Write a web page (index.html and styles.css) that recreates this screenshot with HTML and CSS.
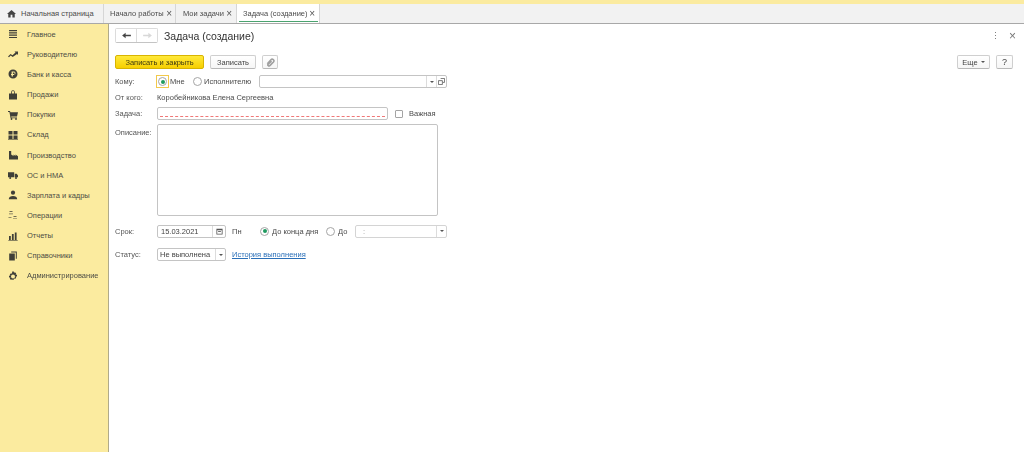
FILE: index.html
```html
<!DOCTYPE html>
<html lang="ru">
<head>
<meta charset="utf-8">
<title>Задача (создание)</title>
<link rel="stylesheet" href="styles.css">
</head>
<body>
<div class="app">
  <div class="topstrip"></div>
  <div class="tabbar">
    <div class="tab tab-home">
      <svg class="ico-home" viewBox="0 0 10 10"><path d="M5 1 L10 5.6 H8.6 V9.5 H6 V6.5 H4 V9.5 H1.4 V5.6 H0 Z"/></svg>
      <span>Начальная страница</span>
    </div>
    <div class="tab tab-a"><span>Начало работы</span><span class="x">×</span></div>
    <div class="tab tab-b"><span>Мои задачи</span><span class="x">×</span></div>
    <div class="tab tab-c"><span>Задача (создание)</span><span class="x">×</span></div>
  </div>
  <div class="main">
    <nav class="side">
      <div class="item"><svg viewBox="0 0 10 10"><path d="M1 1h8v1.2H1zM1 3.3h8v1.2H1zM1 5.6h8v1.2H1zM1 7.9h8v1.2H1z"/></svg><span>Главное</span></div>
      <div class="item"><svg viewBox="0 0 10 10"><path d="M0 7.5 L2.5 5 L4.5 6.3 L7.5 3.5 L6.5 2.6 H10 V6 L9 5 L4.7 8 L2.7 6.6 L1 8.3 Z"/></svg><span>Руководителю</span></div>
      <div class="item"><svg viewBox="0 0 10 10"><path fill-rule="evenodd" d="M5 .5a4.5 4.5 0 1 1 0 9 4.5 4.5 0 0 1 0-9zM3.6 2.5V5H3v1h.6v1.6h1.3V6h1.7V5H4.9V3.6h1.2a.7.7 0 0 1 0 1.4v1a1.8 1.8 0 0 0 0-3.5z"/></svg><span>Банк и касса</span></div>
      <div class="item"><svg viewBox="0 0 10 10"><path d="M1 3.5h2.2V2a1.8 1.8 0 0 1 3.6 0v1.5H9v6H1zM4 3.5h2V2a1 1 0 0 0-2 0z"/></svg><span>Продажи</span></div>
      <div class="item"><svg viewBox="0 0 10 10"><path d="M0 1h2l.4 1.2H10L9 6.5H3.2L3.4 7.4H9v.8H2.6L1.4 1.9H0z"/><circle cx="3.5" cy="9" r=".9"/><circle cx="8" cy="9" r=".9"/></svg><span>Покупки</span></div>
      <div class="item"><svg viewBox="0 0 10 10"><path d="M.5 1h4v3.6h-4zM5.5 1h4v3.6h-4zM.5 5.4h4V9h-4zM5.5 5.4h4V9h-4z"/><path d="M0 9.2h10v.6H0z"/></svg><span>Склад</span></div>
      <div class="item"><svg viewBox="0 0 10 10"><path d="M1 1h2.2v3.5L5.5 6V4.4L7.5 6V4.4L10 6.3V9.5H1z"/></svg><span>Производство</span></div>
      <div class="item"><svg viewBox="0 0 10 10"><path d="M0 2.2h6.2v5H0zM6.8 3.8h1.9L10 5.4v1.8H6.8z"/><circle cx="2.2" cy="8" r="1"/><circle cx="8" cy="8" r="1"/></svg><span>ОС и НМА</span></div>
      <div class="item"><svg viewBox="0 0 10 10"><circle cx="5" cy="2.7" r="2.1"/><path d="M.8 9.2c0-2 1.8-3.2 4.2-3.2s4.2 1.2 4.2 3.2z"/></svg><span>Зарплата и кадры</span></div>
      <div class="item"><svg viewBox="0 0 10 10"><path d="M1.5 1h3v1h-3zM1.5 3h1v1.5h-1zM3.5 3h1v1.5h-1zM5.5 6h3v1h-3zM5.5 8h1v1h-1zM7.5 8h1v1h-1zM.5 7h3v.8h-3z" opacity=".75"/></svg><span>Операции</span></div>
      <div class="item"><svg viewBox="0 0 10 10"><path d="M1 5h1.8v4H1zM3.9 3h1.8v6H3.9zM6.8 1.5h1.8V9H6.8z"/><path d="M.3 9h9.4v.6H.3z"/></svg><span>Отчеты</span></div>
      <div class="item"><svg viewBox="0 0 10 10"><path d="M3.2.6H8.8v7.2h-1V1.6H3.2zM1.2 2.4h5.6v7.2H1.2z"/></svg><span>Справочники</span></div>
      <div class="item"><svg viewBox="0 0 10 10"><path fill-rule="evenodd" d="M4.2.5h1.6l.2 1.3 1-.5 1.2 1.2-.6 1.1 1.4.2v1.6l-1.4.2.6 1.1-1.2 1.2-1-.6-.2 1.4H4.2L4 8.3l-1 .6-1.2-1.2.6-1.1L1 6.4V4.8l1.4-.2-.6-1.1L3 2.3l1 .5zM5 3.6a2 2 0 1 0 0 4 2 2 0 0 0 0-4z"/></svg><span>Администрирование</span></div>
    </nav>
    <section class="content">
      <header class="head">
        <div class="navbtns">
          <div class="navbtn"><svg viewBox="0 0 10 8"><path d="M0 4 L4 .8 V3.2 H10 V4.8 H4 V7.2 Z"/></svg></div>
          <div class="navbtn off"><svg viewBox="0 0 10 8"><path d="M10 4 L6 .8 V3.2 H0 V4.8 H6 V7.2 Z"/></svg></div>
        </div>
        <h1 class="title">Задача (создание)</h1>
        <div class="winctl"><span class="more">⋮</span><span class="close">×</span></div>
      </header>
      <div class="toolbar">
        <button class="btn primary">Записать и закрыть</button>
        <button class="btn save">Записать</button>
        <button class="btn clip"><svg viewBox="0 0 10 10"><path d="M1.5 6.5 L5.5 2 a1.8 1.8 0 0 1 2.8 2.4 L4.3 8.4 a1.2 1.2 0 0 1-1.9-1.6 L6.2 3.6"/></svg></button>
        <div class="spacer"></div>
        <button class="btn eshe">Еще <i class="caret"></i></button>
        <button class="btn help">?</button>
      </div>
      <form class="form">
        <div class="row r-komu">
          <label class="lbl">Кому:</label>
          <div class="focus"><i class="radio on"></i></div>
          <span class="t-me">Мне</span>
          <i class="radio"></i>
          <span class="t-isp">Исполнителю</span>
          <div class="field f-isp"><div class="grow"></div><div class="cell"><i class="caret"></i></div><div class="cell"><svg class="link-ico" viewBox="0 0 8 8"><path d="M3 .5h4.5V5H5.6M.5 3H5v4.5H.5z"/></svg></div></div>
        </div>
        <div class="row r-from">
          <label class="lbl">От кого:</label>
          <span>Коробейникова Елена Сергеевна</span>
        </div>
        <div class="row r-task">
          <label class="lbl">Задача:</label>
          <div class="field f-task"><div class="redline"></div></div>
          <i class="check"></i>
          <span>Важная</span>
        </div>
        <div class="row r-desc">
          <label class="lbl">Описание:</label>
          <div class="field f-desc"></div>
        </div>
        <div class="row r-date">
          <label class="lbl">Срок:</label>
          <div class="field f-date"><div class="grow val">15.03.2021</div><div class="cell cal"><svg viewBox="0 0 8 8"><path fill-rule="evenodd" d="M.5 .8h7v6.7h-7zM1.4 2.6v4h5.2v-4z"/><path d="M2.4 3.6h3.2v1H2.4z"/></svg></div></div>
          <span class="t-pn">Пн</span>
          <i class="radio on"></i>
          <span class="t-eod">До конца дня</span>
          <i class="radio"></i>
          <span class="t-do">До</span>
          <div class="field f-time"><div class="grow val dim">:</div><div class="cell"><i class="caret"></i></div></div>
        </div>
        <div class="row r-status">
          <label class="lbl">Статус:</label>
          <div class="field f-status"><div class="grow val">Не выполнена</div><div class="cell"><i class="caret"></i></div></div>
          <a class="hist" href="#">История выполнения</a>
        </div>
      </form>
    </section>
  </div>
</div>
</body>
</html>
```

FILE: styles.css
```css
* { box-sizing: border-box; }
html, body { margin: 0; padding: 0; height: 100%; background: #fff; overflow: hidden; }
body { font-family: "Liberation Sans", Arial, sans-serif; font-size: 7.5px; color: #4a4a4a; }
.app { width: 1024px; height: 452px; display: flex; flex-direction: column; opacity: .999; filter: blur(0.45px); }
.topstrip { height: 4px; background: #fbeba0; flex: none; }
.tabbar { height: 20px; flex: none; display: flex; align-items: stretch; background: #f2f2f2; border-bottom: 1px solid #a8a8a8; }
.tab { display: flex; align-items: center; border-right: 1px solid #d6d6d6; position: relative; white-space: nowrap; }
.tab-home { width: 104px; padding-left: 7px; gap: 5px; }
.ico-home { width: 9px; height: 9px; fill: #444; }
.tab-a { width: 72px; padding-left: 6px; justify-content: space-between; padding-right: 3px; }
.tab-b { width: 61px; padding-left: 7px; justify-content: space-between; padding-right: 4px; }
.tab-c { width: 83px; padding-left: 6px; justify-content: space-between; padding-right: 4px; background: #fff; }
.tab-c::after { content: ""; position: absolute; left: 2px; right: 1px; bottom: 1px; height: 1px; background: #4ba36f; }
.x { font-size: 10px; color: #555; line-height: 1; }
.main { flex: 1; display: flex; min-height: 0; }
.side { width: 109px; flex: none; background: #fbeb9f; border-right: 1px solid #b0aa8a; display: flex; flex-direction: column; }
.item { height: 20.17px; display: flex; align-items: center; padding-left: 8px; gap: 9px; white-space: nowrap; color: #4d4d45; }
.item svg { width: 10px; height: 10px; fill: #3f3f38; flex: none; }
.content { flex: 1; padding: 4px 11px 0 6px; min-width: 0; }
.head { display: flex; align-items: center; height: 15px; }
.navbtns { display: flex; width: 43px; height: 15px; border: 1px solid #dcdcdc; border-bottom-color: #c4c4c4; border-radius: 2px; }
.navbtn { flex: 1; display: flex; align-items: center; justify-content: center; border-right: 1px solid #dcdcdc; background: #fff; }
.navbtn:last-child { border-right: 0; }
.navbtn svg { width: 9px; height: 7px; fill: #444; }
.navbtn.off svg { fill: #d8d8d8; }
.title { margin: 0 0 0 6px; font-size: 10.5px; font-weight: 400; color: #333; flex: 1; }
.winctl { display: flex; gap: 9px; align-items: center; color: #777; margin-right: -3px; }
.more { font-size: 9px; }
.close { font-size: 12px; line-height: 1; }
.toolbar { display: flex; align-items: center; margin-top: 12px; height: 14px; gap: 6px; }
.btn { height: 14px; padding: 0; font: inherit; color: #444; background: linear-gradient(#fff, #f6f6f6); border: 1px solid #cfcfcf; border-bottom-color: #b8b8b8; border-radius: 2px; display: flex; align-items: center; justify-content: center; }
.primary { width: 89px; background: linear-gradient(#ffe93a, #f7cf00); border-color: #d8b400; color: #3e3a10; }
.save { width: 46px; }
.clip { width: 16px; }
.clip svg { width: 9px; height: 9px; fill: none; stroke: #a0a0a0; stroke-width: 1.8; }
.spacer { flex: 1; }
.eshe { width: 33px; gap: 3px; }
.help { width: 17px; font-size: 9px; font-weight: 400; color: #444; }
.caret { display: inline-block; width: 0; height: 0; border-left: 2px solid transparent; border-right: 2px solid transparent; border-top: 2px solid #555; }
.form { margin-top: 6px; }
.row { display: flex; align-items: center; position: relative; white-space: nowrap; }
.lbl { width: 42px; flex: none; color: #555; }
.field { height: 13px; border: 1px solid #c4c4c4; border-radius: 2px; background: #fff; display: flex; align-items: stretch; flex: none; }
.grow { flex: 1; min-width: 0; }
.cell { width: 10px; border-left: 1px solid #dcdcdc; display: flex; align-items: center; justify-content: center; flex: none; }
.val { padding-left: 3px; line-height: 11px; color: #444; }
.dim { color: #999; padding-left: 7px; }
.radio { width: 9px; height: 9px; border: 1px solid #a4a4a4; border-radius: 50%; background: #fff; display: inline-block; flex: none; position: relative; }
.radio.on::after { content: ""; position: absolute; left: 1.5px; top: 1.5px; width: 4px; height: 4px; border-radius: 50%; background: #1f9a5f; }
.focus { width: 13px; height: 13px; margin-left: -1px; border: 1px solid #f2c94c; display: flex; align-items: center; justify-content: center; flex: none; }
.r-komu { height: 13px; }
.t-me { margin-left: 1px; width: 23px; }
.t-isp { margin-left: 2px; width: 55px; }
.f-isp { width: 188px; }
.link-ico { width: 7px; height: 7px; fill: none; stroke: #555; stroke-width: .9; }
.r-from { height: 13px; margin-top: 3px; }
.r-task { height: 13px; margin-top: 3px; }
.f-task { width: 231px; align-items: flex-end; padding: 0 2px 2px; }
.redline { width: 100%; height: 1px; border-bottom: 1px dashed #f07878; }
.check { width: 8px; height: 8px; border: 1px solid #a4a4a4; border-radius: 1px; background: #fff; margin-left: 7px; flex: none; }
.r-task span { margin-left: 6px; }
.r-desc { margin-top: 4px; align-items: flex-start; }
.r-desc .lbl { padding-top: 4px; }
.f-desc { width: 281px; height: 92px; }
.r-date { margin-top: 8px; height: 14px; }
.f-date { width: 69px; }
.cal { width: 13px; }
.cal svg { width: 7px; height: 7px; fill: #555; }
.t-pn { margin-left: 6px; width: 28px; }
.t-eod { margin-left: 3px; width: 54px; }
.t-do { margin-left: 3px; width: 17px; }
.f-time { width: 92px; border-color: #d4d4d4; }
.r-status { margin-top: 10px; height: 13px; }
.f-status { width: 69px; }
.f-status .val { padding-left: 2px; }
.hist { margin-left: 6px; color: #2a6fb8; text-decoration: underline; }
```
